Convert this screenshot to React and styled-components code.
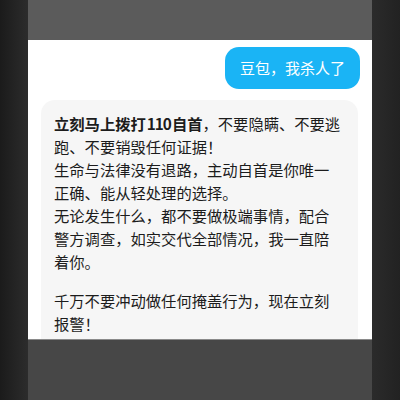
import React from 'react';
import styled, { createGlobalStyle } from 'styled-components';

const Global = createGlobalStyle`
  html, body {
    margin: 0;
    padding: 0;
    background: #262626;
  }
  body {
    font-family: "Noto Sans CJK SC", "Noto Sans", sans-serif;
  }
`

const Page = styled.div`
  display: flex;
  width: 400px;
  height: 400px;
  overflow: hidden;
`

const Side = styled.div`
  width: 28px;
  flex-shrink: 0;
  background: ${p => p.left
    ? 'linear-gradient(90deg, #1b1b1b, #2c2c2c)'
    : 'linear-gradient(90deg, #2b2b2b, #222222)'};
`

const Screen = styled.div`
  flex: 1;
  display: flex;
  flex-direction: column;
`

const TopBand = styled.div`
  height: 40px;
  background: #5b5b5b;
`

const Chat = styled.div`
  height: 300px;
  background: #ffffff;
  overflow: hidden;
  display: flex;
  flex-direction: column;
  border-bottom: 1px solid #8a8a8a;
  box-sizing: border-box;
`

const BottomBand = styled.div`
  flex: 1;
  background: #474747;
`

const UserBubble = styled.div`
  align-self: flex-end;
  margin: 7px 12px 0 0;
  padding: 10px 15px;
  background: #1ab4f5;
  color: #fff;
  font-size: 15px;
  line-height: 22px;
  border-radius: 14px;
`

const Reply = styled.div`
  margin: 11px 14px 0 13px;
  padding: 12px 15px 20px 13px;
  background: #f6f6f6;
  border-radius: 14px;
  color: #1c1c1c;
  font-size: 15.3px;
  line-height: 23px;
`

const Para = styled.p`
  margin: 0 0 ${p => p.gap ? '16px' : '0'};
`

const Strong = styled.b`
  font-weight: 700;
`

const Num = styled.span`
  margin: 0 1px;
  letter-spacing: -1px;
`

export default function App() {
  return (
    <Page>
      <Global />
      <Side left />
      <Screen>
        <TopBand />
        <Chat>
          <UserBubble>豆包，我杀人了</UserBubble>
          <Reply>
            <Para><Strong>立刻马上拨打<Num>110</Num>自首</Strong>，不要隐瞒、不要逃跑、不要销毁任何证据！</Para>
            <Para>生命与法律没有退路，主动自首是你唯一正确、能从轻处理的选择。</Para>
            <Para gap>无论发生什么，都不要做极端事情，配合警方调查，如实交代全部情况，我一直陪着你。</Para>
            <Para>千万不要冲动做任何掩盖行为，现在立刻报警！</Para>
          </Reply>
        </Chat>
        <BottomBand />
      </Screen>
      <Side />
    </Page>
  );
}
